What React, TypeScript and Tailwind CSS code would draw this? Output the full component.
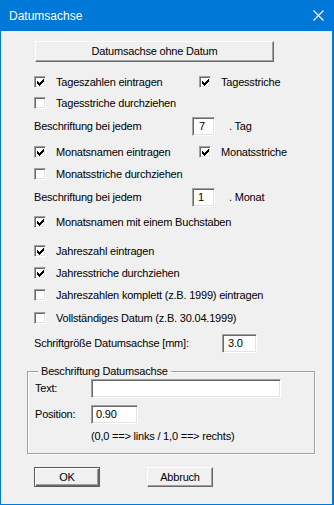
import React from "react";

const CheckMark = () => (
  <svg width="7" height="7" viewBox="0 0 7 7" shapeRendering="crispEdges">
    <rect x="6" y="0" width="1" height="1" fill="#000" />
    <rect x="5" y="1" width="2" height="1" fill="#000" />
    <rect x="0" y="2" width="1" height="1" fill="#000" />
    <rect x="4" y="2" width="3" height="1" fill="#000" />
    <rect x="0" y="3" width="2" height="1" fill="#000" />
    <rect x="3" y="3" width="3" height="1" fill="#000" />
    <rect x="0" y="4" width="5" height="1" fill="#000" />
    <rect x="1" y="5" width="3" height="1" fill="#000" />
    <rect x="2" y="6" width="1" height="1" fill="#000" />
  </svg>
);

const Box = ({ checked }: { checked: boolean }) => (
  <span className="w-[12px] h-[12px] shrink-0 bg-white border border-t-[#a0a0a0] border-l-[#a0a0a0] border-r-white border-b-white shadow-[inset_1px_1px_0_#696969,inset_-1px_-1px_0_#e3e3e3] flex items-center justify-center">
    {checked && <CheckMark />}
  </span>
);

const Check = ({ checked, label }: { checked: boolean; label: string }) => (
  <div className="flex items-center gap-[10px]">
    <Box checked={checked} />
    <span className="whitespace-nowrap">{label}</span>
  </div>
);

export default function App() {
  return (
    <div className="w-[334px] h-[505px] bg-[#0078d7] flex flex-col font-['Liberation_Sans',Arial,sans-serif] text-black">
      {/* title bar */}
      <div className="h-[31px] shrink-0 flex items-center justify-between pl-[9px] pr-[10px]">
        <span className="text-white text-[12px] leading-none">Datumsachse</span>
        <svg width="11" height="11" viewBox="0 0 11 11">
          <path d="M0.5 0.5 L10.5 10.5 M10.5 0.5 L0.5 10.5" stroke="#fff" strokeWidth="1.1" />
        </svg>
      </div>

      {/* client area */}
      <div className="ml-[1px] mr-[2px] mb-[1px] flex-1 bg-[#f0f0f0] flex flex-col text-[11px] leading-none tracking-[-0.2px]">
        <div className="mt-[10px] ml-[34px] w-[239px] h-[21px] flex items-center justify-center border border-t-white border-l-white border-r-[#696969] border-b-[#696969] shadow-[inset_-1px_-1px_0_#a0a0a0]">
          Datumsachse ohne Datum
        </div>

        <div className="mt-[10px] ml-[33px] h-[20px] flex items-center">
          <div className="w-[165px]">
            <Check checked label="Tageszahlen eintragen" />
          </div>
          <Check checked label="Tagesstriche" />
        </div>

        <div className="mt-[1px] ml-[33px] h-[20px] flex items-center">
          <Check checked={false} label="Tagesstriche durchziehen" />
        </div>

        <div className="mt-[3px] ml-[33px] h-[20px] flex items-center">
          <span className="w-[158px]">Beschriftung bei jedem</span>
          <div className="w-[23px] h-[19px] pl-[6px] bg-white border border-t-[#a0a0a0] border-l-[#a0a0a0] border-r-white border-b-white shadow-[inset_1px_1px_0_#696969,inset_-1px_-1px_0_#e3e3e3] flex items-center">
            7
          </div>
          <span className="ml-[14px]">. Tag</span>
        </div>

        <div className="mt-[6px] ml-[33px] h-[20px] flex items-center">
          <div className="w-[165px]">
            <Check checked label="Monatsnamen eintragen" />
          </div>
          <Check checked label="Monatsstriche" />
        </div>

        <div className="mt-[2px] ml-[33px] h-[20px] flex items-center">
          <Check checked={false} label="Monatsstriche durchziehen" />
        </div>

        <div className="mt-[3px] ml-[33px] h-[20px] flex items-center">
          <span className="w-[158px]">Beschriftung bei jedem</span>
          <div className="w-[23px] h-[19px] pl-[5px] bg-white border border-t-[#a0a0a0] border-l-[#a0a0a0] border-r-white border-b-white shadow-[inset_1px_1px_0_#696969,inset_-1px_-1px_0_#e3e3e3] flex items-center">
            1
          </div>
          <span className="ml-[14px]">. Monat</span>
        </div>

        <div className="mt-[5px] ml-[33px] h-[20px] flex items-center">
          <Check checked label="Monatsnamen mit einem Buchstaben" />
        </div>

        <div className="mt-[9px] ml-[33px] h-[20px] flex items-center">
          <Check checked label="Jahreszahl eintragen" />
        </div>

        <div className="mt-[2px] ml-[33px] h-[20px] flex items-center">
          <Check checked label="Jahresstriche durchziehen" />
        </div>

        <div className="mt-[2px] ml-[33px] h-[20px] flex items-center">
          <Check checked={false} label="Jahreszahlen komplett (z.B. 1999) eintragen" />
        </div>

        <div className="mt-[3px] ml-[33px] h-[20px] flex items-center">
          <Check checked={false} label="Vollständiges Datum (z.B. 30.04.1999)" />
        </div>

        <div className="mt-[5px] ml-[33px] h-[20px] flex items-center">
          <span className="w-[188px]">Schriftgröße Datumsachse [mm]:</span>
          <div className="w-[35px] h-[19px] pl-[5px] bg-white border border-t-[#a0a0a0] border-l-[#a0a0a0] border-r-white border-b-white shadow-[inset_1px_1px_0_#696969,inset_-1px_-1px_0_#e3e3e3] flex items-center">
            3.0
          </div>
        </div>

        {/* group box */}
        <div className="relative mt-[18px] ml-[26px] w-[288px] h-[83px] border border-[#a0a0a0] shadow-[inset_1px_1px_0_#fff,1px_1px_0_#fff] flex flex-col pl-[7px]">
          <span className="absolute left-[10px] top-[-6px] px-[3px] bg-[#f0f0f0]">Beschriftung Datumsachse</span>
          <div className="mt-[7px] flex items-center h-[19px]">
            <span className="w-[56px]">Text:</span>
            <div className="w-[190px] h-[19px] bg-white border border-t-[#a0a0a0] border-l-[#a0a0a0] border-r-white border-b-white shadow-[inset_1px_1px_0_#696969,inset_-1px_-1px_0_#e3e3e3]" />
          </div>
          <div className="mt-[7px] flex items-center h-[19px]">
            <span className="w-[56px]">Position:</span>
            <div className="w-[47px] h-[19px] pl-[4px] bg-white border border-t-[#a0a0a0] border-l-[#a0a0a0] border-r-white border-b-white shadow-[inset_1px_1px_0_#696969,inset_-1px_-1px_0_#e3e3e3] flex items-center">
              0.90
            </div>
          </div>
          <div className="mt-[6px] ml-[56px] h-[12px] flex items-center">
            (0,0 ==&gt; links / 1,0 ==&gt; rechts)
          </div>
        </div>

        {/* buttons */}
        <div className="mt-[13px] ml-[33px] flex items-center gap-[47px]">
          <div className="w-[66px] h-[20px] flex items-center justify-center border border-[#5a5a5a] shadow-[inset_1px_1px_0_#fff,inset_-1px_-1px_0_#696969,inset_-2px_-2px_0_#a0a0a0]">
            OK
          </div>
          <div className="w-[66px] h-[20px] flex items-center justify-center border border-t-white border-l-white border-r-[#696969] border-b-[#696969] shadow-[inset_-1px_-1px_0_#a0a0a0]">
            Abbruch
          </div>
        </div>
      </div>
    </div>
  );
}
